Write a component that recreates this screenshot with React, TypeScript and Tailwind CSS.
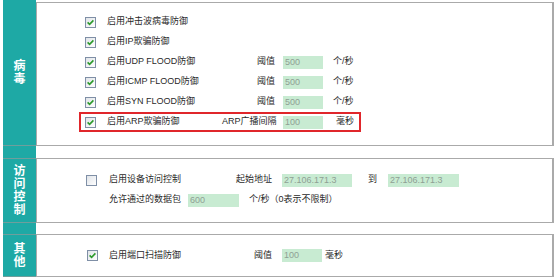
import React from "react";

const font = { fontFamily: '"Liberation Sans", "Noto Sans CJK SC", sans-serif' };

const CheckBox = ({ checked }: { checked: boolean }) => (
  <svg width="11" height="11" viewBox="0 0 11 11" className="shrink-0">
    <defs>
      <linearGradient id="cbg" x1="0" y1="0" x2="1" y2="1">
        <stop offset="0" stopColor="#dfe3e8" />
        <stop offset="1" stopColor="#ffffff" />
      </linearGradient>
    </defs>
    <rect x="0.5" y="0.5" width="10" height="10" fill="url(#cbg)" stroke="#7f8fa6" />
    {checked && <path d="M2.6 5.4 L4.6 7.4 L8.4 3.4" fill="none" stroke="#2c9a2c" strokeWidth="1.6" />}
  </svg>
);

const Field = ({ value, w }: { value: string; w: string }) => (
  <span className={`${w} h-[13px] bg-[#c8ebd2] text-[#8f9f94] text-[9px] leading-[13px] pl-[2px] shrink-0`}>{value}</span>
);

const Teal = ({ label, cls }: { label: string[]; cls: string }) => (
  <div className={`w-[33px] shrink-0 bg-[#1ea9a5] flex flex-col items-center justify-center text-white font-bold text-[12px] leading-[13px] ${cls}`}>
    {label.map((c) => (
      <span key={c}>{c}</span>
    ))}
  </div>
);

const VirusRow = ({ label, tail, red }: { label: string; tail?: React.ReactNode; red?: boolean }) => (
  <div className={`ml-[42px] w-[282px] h-[20px] flex items-center pl-[4px] border-2 ${red ? "border-[#e0262b]" : "border-transparent"}`}>
    <CheckBox checked />
    <span className={`ml-[11px] ${tail ? (red ? "w-[115px]" : "w-[150px]") : ""} shrink-0`}>{label}</span>
    {tail}
  </div>
);

export default function App() {
  return (
    <div className="w-[558px] h-[280px] bg-white pl-[3px] pr-[4px] text-[9px] text-[#2a2a2a] whitespace-nowrap flex flex-col" style={font}>
      {/* 病毒 */}
      <div className="flex h-[146px]">
        <Teal label={["病", "毒"]} cls="border-b border-[#6f9e9c]" />
        <div className="flex-1 mt-[2px] border border-r-2 border-[#aaaaaa] pt-[9px]">
          <VirusRow label="启用冲击波病毒防御" />
          <VirusRow label="启用IP欺骗防御" />
          {["UDP", "ICMP", "SYN"].map((p) => (
            <VirusRow
              key={p}
              label={`启用${p} FLOOD防御`}
              tail={
                <>
                  <span className="w-[26px] shrink-0">阈值</span>
                  <Field value="500" w="w-[40px]" />
                  <span className="ml-[10px]">个/秒</span>
                </>
              }
            />
          ))}
          <VirusRow
            red
            label="启用ARP欺骗防御"
            tail={
              <>
                <span className="w-[61px] shrink-0">ARP广播间隔</span>
                <Field value="100" w="w-[40px]" />
                <span className="ml-[13px]">毫秒</span>
              </>
            }
          />
        </div>
      </div>
      <div className="flex h-[12px]">
        <div className="w-[33px] bg-[#1ea9a5]" />
      </div>

      {/* 访问控制 */}
      <div className="flex h-[65px]">
        <Teal label={["访", "问", "控", "制"]} cls="border-y border-[#6f9e9c]" />
        <div className="flex-1 border border-r-2 border-[#aaaaaa] pt-[11px] pl-[49px]">
          <div className="h-[20px] flex items-center">
            <CheckBox checked={false} />
            <span className="ml-[12px] w-[127px] shrink-0">启用设备访问控制</span>
            <span className="w-[46px] shrink-0">起始地址</span>
            <Field value="27.106.171.3" w="w-[70px]" />
            <span className="ml-[16px] w-[20px] shrink-0">到</span>
            <Field value="27.106.171.3" w="w-[71px]" />
          </div>
          <div className="h-[20px] flex items-center pl-[23px]">
            <span className="w-[79px] shrink-0">允许通过的数据包</span>
            <Field value="600" w="w-[51px]" />
            <span className="ml-[10px]">个/秒（0表示不限制）</span>
          </div>
        </div>
      </div>
      <div className="flex h-[11px]">
        <div className="w-[33px] bg-[#1ea9a5]" />
      </div>

      {/* 其他 */}
      <div className="flex h-[43px]">
        <Teal label={["其", "他"]} cls="border-y border-[#6f9e9c]" />
        <div className="flex-1 border border-r-2 border-[#aaaaaa] pl-[50px] flex items-center">
          <CheckBox checked />
          <span className="ml-[11px] w-[145px] shrink-0">启用端口扫描防御</span>
          <span className="w-[28px] shrink-0">阈值</span>
          <Field value="100" w="w-[40px]" />
          <span className="ml-[3px]">毫秒</span>
        </div>
      </div>
    </div>
  );
}
